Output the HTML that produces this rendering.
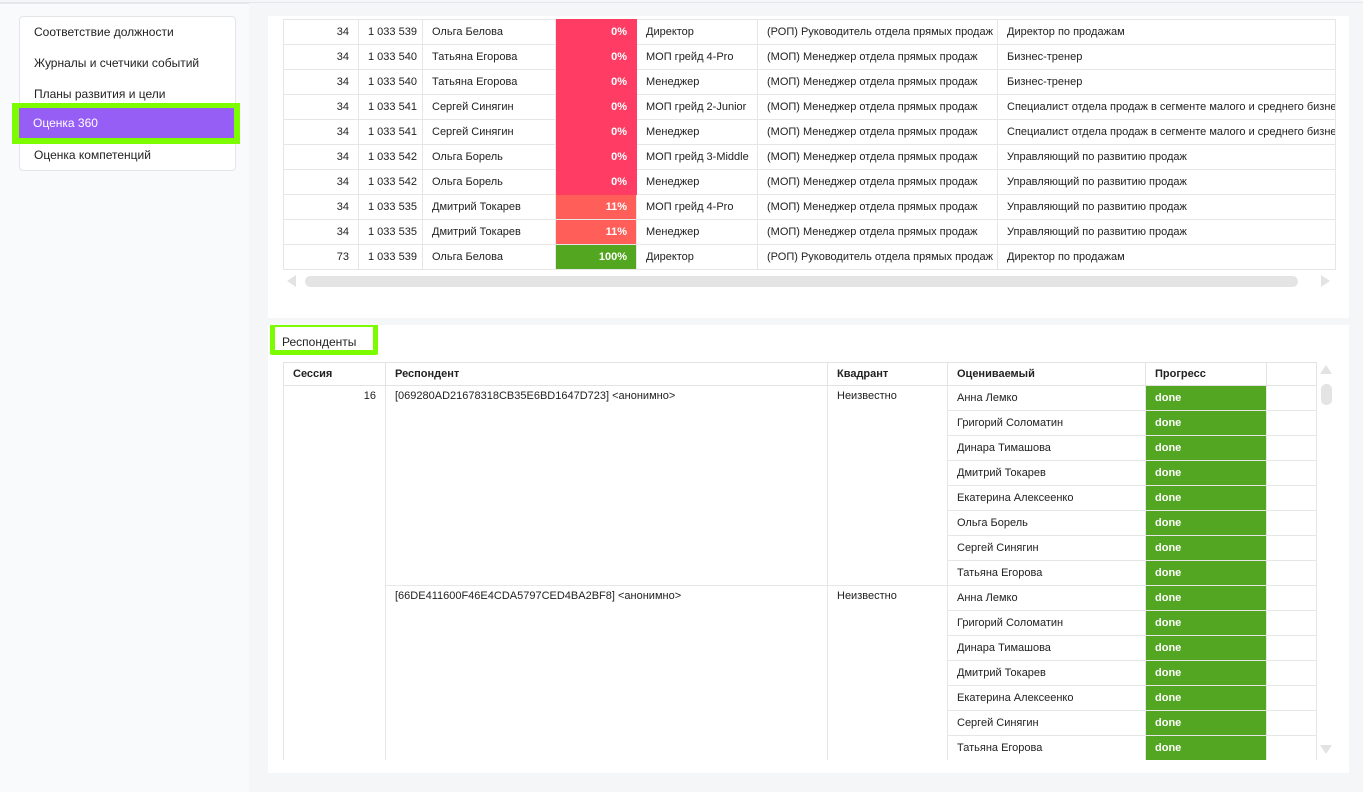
<!DOCTYPE html>
<html><head><meta charset="utf-8"><style>
*{box-sizing:border-box;margin:0;padding:0}
body{width:1363px;height:792px;background:#f5f6f8;font-family:"Liberation Sans",sans-serif;font-size:11px;color:#222;position:relative;overflow:hidden}
.abs{position:absolute}
.side{left:0;top:3px;width:249px;height:789px;background:#f9fafc;border-top:1px solid #e6e8ec}
.topline{left:0;top:2px;width:1363px;height:1px;background:#e4e6ea}
.card{left:19px;top:16px;width:217px;height:155px;background:#fff;border:1px solid #e3e5e9;border-radius:4px}
.mi{position:absolute;left:14px;font-size:12px;color:#222}
.panel{background:#fff;left:268px;width:1081px}
table{border-collapse:collapse;table-layout:fixed;position:absolute}
td{border:1px solid #e6e6e6;height:25px;padding:0 9px;white-space:nowrap;overflow:hidden;font-size:11px}
.r{text-align:right}
.red{background:#ff3c63;color:#fff;font-weight:bold;text-align:right;border-color:#ff3c63}
.or{background:#ff5f58;color:#fff;font-weight:bold;text-align:right}
.gr{background:#52a620;color:#fff;font-weight:bold;text-align:right}
.dn{background:#53a622;color:#fff;font-weight:bold}
th{border:1px solid #e3e3e3;height:23px;text-align:left;padding:0 9px;font-weight:bold;font-size:11px}
</style></head><body>
<div class="abs topline"></div>
<div class="abs side"></div>
<div class="abs card">
<div class="mi" style="top:8px">Соответствие должности</div>
<div class="mi" style="top:39px">Журналы и счетчики событий</div>
<div class="mi" style="top:70px">Планы развития и цели</div>
<div class="mi" style="top:131px">Оценка компетенций</div>
</div>
<div class="abs" style="left:12px;top:103px;width:228px;height:41px;background:#7dfc00"></div>
<div class="abs" style="left:19px;top:108px;width:215px;height:30px;background:#965ef5;color:#fff;font-size:12px;padding:8px 14px">Оценка 360</div>

<div class="abs panel" style="top:16px;height:302px;overflow:hidden">
<table style="left:15px;top:3px;width:1053px">
<colgroup><col style="width:75px"><col style="width:64px"><col style="width:133px"><col style="width:81px"><col style="width:121px"><col style="width:240px"><col></colgroup>
<tr><td class="r">34</td><td>1 033 539</td><td>Ольга Белова</td><td class="red">0%</td><td>Директор</td><td>(РОП) Руководитель отдела прямых продаж</td><td>Директор по продажам</td></tr>
<tr><td class="r">34</td><td>1 033 540</td><td>Татьяна Егорова</td><td class="red">0%</td><td>МОП грейд 4-Pro</td><td>(МОП) Менеджер отдела прямых продаж</td><td>Бизнес-тренер</td></tr>
<tr><td class="r">34</td><td>1 033 540</td><td>Татьяна Егорова</td><td class="red">0%</td><td>Менеджер</td><td>(МОП) Менеджер отдела прямых продаж</td><td>Бизнес-тренер</td></tr>
<tr><td class="r">34</td><td>1 033 541</td><td>Сергей Синягин</td><td class="red">0%</td><td>МОП грейд 2-Junior</td><td>(МОП) Менеджер отдела прямых продаж</td><td>Специалист отдела продаж в сегменте малого и среднего бизнеса</td></tr>
<tr><td class="r">34</td><td>1 033 541</td><td>Сергей Синягин</td><td class="red">0%</td><td>Менеджер</td><td>(МОП) Менеджер отдела прямых продаж</td><td>Специалист отдела продаж в сегменте малого и среднего бизнеса</td></tr>
<tr><td class="r">34</td><td>1 033 542</td><td>Ольга Борель</td><td class="red">0%</td><td>МОП грейд 3-Middle</td><td>(МОП) Менеджер отдела прямых продаж</td><td>Управляющий по развитию продаж</td></tr>
<tr><td class="r">34</td><td>1 033 542</td><td>Ольга Борель</td><td class="red">0%</td><td>Менеджер</td><td>(МОП) Менеджер отдела прямых продаж</td><td>Управляющий по развитию продаж</td></tr>
<tr><td class="r">34</td><td>1 033 535</td><td>Дмитрий Токарев</td><td class="or">11%</td><td>МОП грейд 4-Pro</td><td>(МОП) Менеджер отдела прямых продаж</td><td>Управляющий по развитию продаж</td></tr>
<tr><td class="r">34</td><td>1 033 535</td><td>Дмитрий Токарев</td><td class="or">11%</td><td>Менеджер</td><td>(МОП) Менеджер отдела прямых продаж</td><td>Управляющий по развитию продаж</td></tr>
<tr><td class="r">73</td><td>1 033 539</td><td>Ольга Белова</td><td class="gr">100%</td><td>Директор</td><td>(РОП) Руководитель отдела прямых продаж</td><td>Директор по продажам</td></tr>
</table>
<div class="abs" style="left:19px;top:259px;width:0;height:0;border-top:6px solid transparent;border-bottom:6px solid transparent;border-right:9px solid #e3e3e3"></div>
<div class="abs" style="left:37px;top:260px;width:993px;height:11px;border-radius:6px;background:#e4e4e4"></div>
<div class="abs" style="left:1053px;top:259px;width:0;height:0;border-top:6px solid transparent;border-bottom:6px solid transparent;border-left:9px solid #e3e3e3"></div>
</div>

<div class="abs panel" style="top:325px;height:448px;overflow:hidden">
<div class="abs" style="left:2px;top:-3px;width:108px;height:33px;border:5px solid #7dfc00;border-radius:2px"></div>
<div class="abs" style="left:14px;top:10px;font-size:12px">Респонденты</div>
<table style="left:15px;top:37px;width:1034px">
<colgroup><col style="width:102px"><col style="width:442px"><col style="width:120px"><col style="width:198px"><col style="width:121px"><col></colgroup>
<tr><th>Сессия</th><th>Респондент</th><th>Квадрант</th><th>Оцениваемый</th><th>Прогресс</th><th></th></tr>
<tr><td class="r" rowspan="16" style="vertical-align:top;padding-top:4px">16</td><td rowspan="8" style="vertical-align:top;padding-top:4px">[069280AD21678318CB35E6BD1647D723] &lt;анонимно&gt;</td><td rowspan="8" style="vertical-align:top;padding-top:4px">Неизвестно</td><td>Анна Лемко</td><td class="dn">done</td><td></td></tr>
<tr><td>Григорий Соломатин</td><td class="dn">done</td><td></td></tr>
<tr><td>Динара Тимашова</td><td class="dn">done</td><td></td></tr>
<tr><td>Дмитрий Токарев</td><td class="dn">done</td><td></td></tr>
<tr><td>Екатерина Алексеенко</td><td class="dn">done</td><td></td></tr>
<tr><td>Ольга Борель</td><td class="dn">done</td><td></td></tr>
<tr><td>Сергей Синягин</td><td class="dn">done</td><td></td></tr>
<tr><td>Татьяна Егорова</td><td class="dn">done</td><td></td></tr>
<tr><td rowspan="8" style="vertical-align:top;padding-top:4px">[66DE411600F46E4CDA5797CED4BA2BF8] &lt;анонимно&gt;</td><td rowspan="8" style="vertical-align:top;padding-top:4px">Неизвестно</td><td>Анна Лемко</td><td class="dn">done</td><td></td></tr>
<tr><td>Григорий Соломатин</td><td class="dn">done</td><td></td></tr>
<tr><td>Динара Тимашова</td><td class="dn">done</td><td></td></tr>
<tr><td>Дмитрий Токарев</td><td class="dn">done</td><td></td></tr>
<tr><td>Екатерина Алексеенко</td><td class="dn">done</td><td></td></tr>
<tr><td>Сергей Синягин</td><td class="dn">done</td><td></td></tr>
<tr><td>Татьяна Егорова</td><td class="dn">done</td><td></td></tr>
<tr><td>Татьяна Егорова</td><td class="dn">done</td><td></td></tr>
</table>
<div class="abs" style="left:0;top:435px;width:1081px;height:13px;background:#fff"></div>
<div class="abs" style="left:1052px;top:40px;width:0;height:0;border-left:6px solid transparent;border-right:6px solid transparent;border-bottom:9px solid #e3e3e3"></div>
<div class="abs" style="left:1053px;top:59px;width:11px;height:21px;border-radius:5px;background:#e4e4e4"></div>
<div class="abs" style="left:1052px;top:420px;width:0;height:0;border-left:6px solid transparent;border-right:6px solid transparent;border-top:9px solid #e3e3e3"></div>
</div>
</body></html>
